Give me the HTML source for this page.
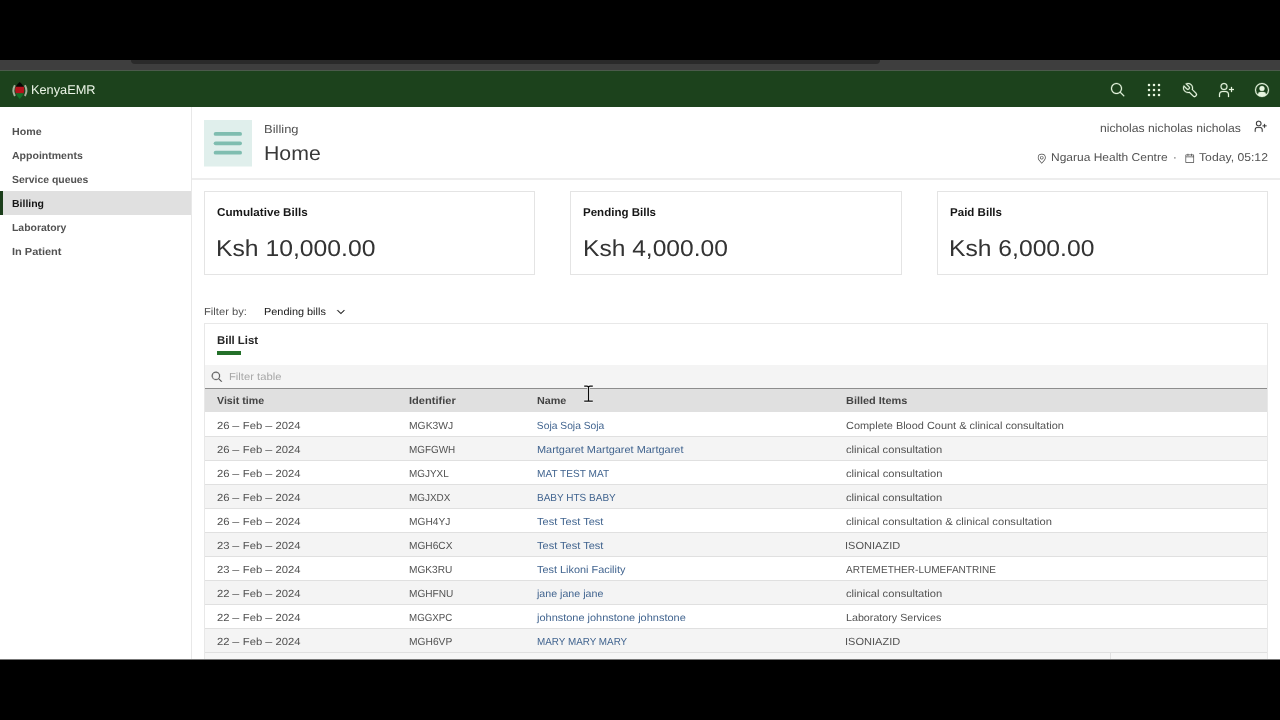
<!DOCTYPE html>
<html lang="en">
<head>
<meta charset="utf-8">
<title>KenyaEMR - Billing</title>
<style>
*{box-sizing:border-box;margin:0;padding:0}
html,body{width:1280px;height:720px;overflow:hidden;background:#000;font-family:"Liberation Sans",sans-serif;}
#stage{position:absolute;left:0;top:0;width:1280px;height:720px;background:#000;overflow:hidden}
.b{position:absolute}
#txt{position:absolute;left:0;top:0;width:1280px;height:720px;will-change:transform;text-rendering:geometricPrecision}
.t{position:absolute;white-space:nowrap;line-height:1;transform-origin:0 0;display:inline-block;font-family:"Liberation Sans",sans-serif}
.d{display:inline-block;width:.62em;transform:scaleX(.62);transform-origin:0 0;white-space:nowrap}
#chrome{left:0;top:60px;width:1280px;height:11px;background:#3e3e3e}
#chrome .tab{position:absolute;left:131px;top:0;width:749px;height:4px;background:#2a2a2a;border-radius:0 0 6px 6px}
#chrome .line{position:absolute;left:0;top:10px;width:1280px;height:1px;background:#4b5a4b}
#topbar{left:0;top:71px;width:1280px;height:36px;background:#1c421c}
#app{left:0;top:107px;width:1280px;height:553px;background:#fff}
#side{left:0;top:107px;width:192px;height:553px;border-right:1px solid #e8e8e8;background:#fff}
#navon{left:0;top:191px;width:191px;height:24px;background:#e0e0e0;border-left:3px solid #1a3d1a}
#phead{left:192px;top:107px;width:1088px;height:73px;border-bottom:2px solid #ededed}
.card{position:absolute;top:191px;height:84px;border:1px solid #e4e4e4;background:#fff}
#tbl{left:204px;top:323px;width:1064px;height:340px;border:1px solid #e8e8e8;background:#fff}
#ul{left:217px;top:351px;width:24px;height:4px;background:#24702a}
#search{left:205px;top:365px;width:1062px;height:24px;background:#f4f4f4;border-bottom:1px solid #8d8d8d}
#th{left:205px;top:389px;width:1062px;height:23px;background:#e0e0e0}
.row{position:absolute;left:205px;width:1062px;height:24px;border-bottom:1px solid #e0e0e0;background:#fff}
.row.g{background:#f4f4f4}
</style>
</head>
<body>
<div id="stage">
  <div class="b" id="chrome"><div class="tab"></div><div class="line"></div></div>
  <div class="b" id="topbar"></div>
  <div class="b" id="app"></div>
  <div class="b" id="side"></div>
  <div class="b" id="navon"></div>
  <div class="b" id="phead"></div>
  <div class="card" style="left:204px;width:331px"></div>
  <div class="card" style="left:570px;width:332px"></div>
  <div class="card" style="left:937px;width:331px"></div>
  <div class="b" id="tbl"></div>
  <div class="b" id="ul"></div>
  <div class="b" id="search"></div>
  <div class="b" id="th"></div>
  <div class="row" style="top:412px;height:25px"></div>
  <div class="row g" style="top:437px"></div>
  <div class="row" style="top:461px"></div>
  <div class="row g" style="top:485px"></div>
  <div class="row" style="top:509px"></div>
  <div class="row g" style="top:533px"></div>
  <div class="row" style="top:557px"></div>
  <div class="row g" style="top:581px"></div>
  <div class="row" style="top:605px"></div>
  <div class="row g" style="top:629px"></div>
  <div class="b" style="left:205px;top:653px;width:1062px;height:7px;background:#f6f6f6"></div>
  <div class="b" style="left:1110px;top:653px;width:1px;height:7px;background:#e0e0e0"></div>

  <!-- logo -->
  <svg class="b" style="left:10px;top:79.6px;width:20px;height:21px" viewBox="0 0 20 21">
    <path d="M4.9 5.300 Q1.900 10.600 4.900 15.900" fill="none" stroke="#a3b09b" stroke-width="2"/>
    <path d="M14.900 5.300 Q17.900 10.600 14.900 15.900" fill="none" stroke="#a3b09b" stroke-width="2"/>
    <path d="M9.700 2 Q6.600 4.500 5.500 6.900 L13.900 6.900 Q12.800 4.500 9.700 2Z" fill="#050805"/>
    <path d="M5.500 6.800 Q4.700 10 5.700 13.400 L13.700 13.400 Q14.700 10 13.900 6.800Z" fill="#b5121a"/>
    <path d="M5.700 13.300 Q6.900 16.600 9.700 18.900 Q12.500 16.600 13.700 13.300Z" fill="#15762a" fill-opacity="0.92"/>
  </svg>
  <!-- top icons -->
  <svg class="b" style="left:1110px;top:81.6px;width:16px;height:16px" viewBox="0 0 32 32" fill="#e6f5df" stroke="#e6f5df" stroke-width="0.5"><path d="M29,27.5859l-7.5521-7.5521a11.0177,11.0177,0,1,0-1.4141,1.4141L27.5859,29ZM4,13a9,9,0,1,1,9,9A9.01,9.01,0,0,1,4,13Z"/></svg>
  <svg class="b" style="left:1146px;top:81.6px;width:16px;height:16px" viewBox="0 0 32 32" fill="#e6f5df" stroke="#e6f5df" stroke-width="0.5"><path d="M14 4H18V8H14zM4 4H8V8H4zM24 4H28V8H24zM14 14H18V18H14zM4 14H8V18H4zM24 14H28V18H24zM14 24H18V28H14zM4 24H8V28H4zM24 24H28V28H24z"/></svg>
  <svg class="b" style="left:1182px;top:81.6px;width:16px;height:16px" viewBox="0 0 32 32" fill="#e6f5df" stroke="#e6f5df" stroke-width="0.5"><path d="M12.1,2A9.8,9.8,0,0,0,6.7,3.6L13.1,10a2.1,2.1,0,0,1,.2,3,2.1,2.1,0,0,1-3-.2L3.7,6.4A9.84,9.84,0,0,0,2,12.1,10.14,10.14,0,0,0,12.1,22.2a10.9,10.9,0,0,0,2.6-.3l6.7,6.7a5,5,0,0,0,7.1-7.1l-6.7-6.7a10.9,10.9,0,0,0,.3-2.6A10,10,0,0,0,12.1,2Zm8,10.1a7.61,7.61,0,0,1-.3,2.1l-.3,1.1.8.8,6.7,6.7a2.88,2.88,0,0,1,.9,2.1A2.720,2.720,0,0,1,27,27a2.900,2.900,0,0,1-4.200,0l-6.700-6.700-.8-.8-1.100.3a7.610,7.610,0,0,1-2.100.3,8.270,8.270,0,0,1-5.700-2.300A7.630,7.630,0,0,1,4,12.100a8.330,8.330,0,0,1,.3-2.200l4.400,4.400a4.140,4.140,0,0,0,5.900.2,4.140,4.140,0,0,0-.2-5.900L10,4.200a6.450,6.450,0,0,1,2-.3,8.270,8.270,0,0,1,5.700,2.300A8.490,8.490,0,0,1,20.100,12.100Z"/></svg>
  <svg class="b" style="left:1218px;top:81.6px;width:16px;height:16px" viewBox="0 0 32 32" fill="#e6f5df" stroke="#e6f5df" stroke-width="0.5"><path d="M32 14L28 14 28 10 26 10 26 14 22 14 22 16 26 16 26 20 28 20 28 16 32 16 32 14zM12 4a5 5 0 11-5 5 5 5 0 015-5m0-2a7 7 0 107 7A7 7 0 0012 2zM22 30H20V25a5 5 0 00-5-5H9a5 5 0 00-5 5v5H2V25a7 7 0 017-7h6a7 7 0 017 7z"/></svg>
  <svg class="b" style="left:1254px;top:81.6px;width:16px;height:16px" viewBox="0 0 32 32" fill="#e6f5df" stroke="#e6f5df" stroke-width="0.5"><path d="M16,8a5,5,0,1,0,5,5A5,5,0,0,0,16,8Z"/><path d="M16,2A14,14,0,1,0,30,16,14.0158,14.0158,0,0,0,16,2Zm7.9925,22.9258A5.0016,5.0016,0,0,0,19,20H13a5.0016,5.0016,0,0,0-4.9925,4.9258,12,12,0,1,1,15.985,0Z"/></svg>

  <!-- page icon -->
  <svg class="b" style="left:204px;top:120px;width:48px;height:47px" viewBox="0 0 48 47">
    <rect x="0" y="0" width="48" height="46.5" fill="#e0efec"/>
    <rect x="9.700" y="12" width="28.300" height="3.800" rx="1.9" fill="#7fbdb0"/>
    <rect x="9.700" y="21.400" width="28.300" height="3.800" rx="1.9" fill="#7fbdb0"/>
    <rect x="9.700" y="30.800" width="28.300" height="3.800" rx="1.9" fill="#7fbdb0"/>
  </svg>
  <!-- header right icons -->
  <svg class="b" style="left:1254.2px;top:120.1px;width:12.5px;height:12.5px" viewBox="0 0 32 32" fill="#2b2b2b" stroke="#2b2b2b" stroke-width="0.5"><path d="M32 14L28 14 28 10 26 10 26 14 22 14 22 16 26 16 26 20 28 20 28 16 32 16 32 14zM12 4a5 5 0 11-5 5 5 5 0 015-5m0-2a7 7 0 107 7A7 7 0 0012 2zM22 30H20V25a5 5 0 00-5-5H9a5 5 0 00-5 5v5H2V25a7 7 0 017-7h6a7 7 0 017 7z"/></svg>
  <svg class="b" style="left:1036px;top:152.7px;width:11.5px;height:11.5px" viewBox="0 0 32 32" fill="#4a4a4a"><path d="M16,18a5,5,0,1,1,5-5A5.0057,5.0057,0,0,1,16,18Zm0-8a3,3,0,1,0,3,3A3.0033,3.0033,0,0,0,16,10Z"/><path d="M16,30,7.5645,20.0513c-.0479-.0571-.3482-.4515-.3482-.4515A10.8888,10.8888,0,0,1,5,13a11,11,0,0,1,22,0,10.8844,10.8844,0,0,1-2.2148,6.5973l-.0015.0025s-.3.3944-.3447.4474ZM8.8125,18.395c.001.0007.2334.3082.2866.3744L16,26.9079l6.91-8.15c.0439-.0552.2783-.3649.2788-.3657A8.901,8.901,0,0,0,25,13,9,9,0,1,0,7,13a8.9054,8.9054,0,0,0,1.8125,5.395Z"/></svg>
  <svg class="b" style="left:1184px;top:153.3px;width:11.5px;height:11.5px" viewBox="0 0 32 32" fill="#4a4a4a"><path d="M26,4h-4V2h-2v2h-8V2h-2v2H6C4.9,4,4,4.9,4,6v20c0,1.1,0.9,2,2,2h20c1.1,0,2-0.9,2-2V6C28,4.9,27.1,4,26,4z M26,26H6V12h20V26z M26,10H6V6h4v2h2V6h8v2h2V6h4V10z"/></svg>
  <!-- chevron -->
  <svg class="b" style="left:335.4px;top:305.6px;width:11.8px;height:11.8px" viewBox="0 0 32 32" fill="#161616" stroke="#161616" stroke-width="0.9"><path d="M16 22L6 12 7.4 10.6 16 19.2 24.6 10.6 26 12z"/></svg>
  <!-- search icon -->
  <svg class="b" style="left:210.7px;top:370.9px;width:12px;height:12px" viewBox="0 0 32 32" fill="#4a4a4a" stroke="#4a4a4a" stroke-width="0.7"><path d="M29,27.5859l-7.5521-7.5521a11.0177,11.0177,0,1,0-1.4141,1.4141L27.5859,29ZM4,13a9,9,0,1,1,9,9A9.01,9.01,0,0,1,4,13Z"/></svg>
  <!-- I-beam cursor -->
  <svg class="b" style="left:582px;top:383px;width:14px;height:21px" viewBox="0 0 14 21"><g fill="none" stroke-linecap="butt"><path d="M2.2 3 H5 Q6.500 3 6.500 4.200 Q6.500 3 8 3 H10.800 M6.500 3.600 V17.600 M2.200 18.200 H5 Q6.500 18.200 6.500 17.200 Q6.500 18.200 8 18.200 H10.800" stroke="#fff" stroke-width="2.8" stroke-opacity="0.9"/><path d="M2.200 3 H5 Q6.500 3 6.500 4.200 Q6.500 3 8 3 H10.800 M6.500 3.600 V17.600 M2.200 18.200 H5 Q6.500 18.200 6.500 17.200 Q6.500 18.200 8 18.200 H10.800" stroke="#0a0a0a" stroke-width="1.25"/></g></svg>

<div class="b" style="left:0;top:659px;width:1280px;height:1px;background:#777"></div>
  <div class="b" style="left:0;top:660px;width:1280px;height:60px;background:#000"></div>
<div id="txt">
<span class="t" id="brand" style="left:30.58px;top:84px;font-size:12.7px;color:#ecf6e8;transform:scaleX(1.0064)">KenyaEMR</span>
<span class="t" id="nav0" style="left:12.48px;top:128px;font-size:10.3px;color:#525252;font-weight:bold;transform:scaleX(1.0356)">Home</span>
<span class="t" id="nav1" style="left:12.23px;top:152px;font-size:10.3px;color:#525252;font-weight:bold;transform:scaleX(1.0222)">Appointments</span>
<span class="t" id="nav2" style="left:12.24px;top:176px;font-size:10.3px;color:#525252;font-weight:bold;transform:scaleX(1.0114)">Service queues</span>
<span class="t" id="nav3" style="left:12.46px;top:200px;font-size:10.3px;color:#161616;font-weight:bold;transform:scaleX(1.0170)">Billing</span>
<span class="t" id="nav4" style="left:11.91px;top:224px;font-size:10.3px;color:#525252;font-weight:bold;transform:scaleX(1.0116)">Laboratory</span>
<span class="t" id="nav5" style="left:12.27px;top:248px;font-size:10.3px;color:#525252;font-weight:bold;transform:scaleX(1.0683)">In Patient</span>
<span class="t" id="ph1" style="left:263.82px;top:125px;font-size:11.5px;color:#525252;transform:scaleX(1.1254)">Billing</span>
<span class="t" id="ph2" style="left:263.87px;top:144px;font-size:20.1px;color:#393939;transform:scaleX(1.0594)">Home</span>
<span class="t" id="user" style="left:1100.43px;top:123px;font-size:11.7px;color:#525252;transform:scaleX(1.0423)">nicholas nicholas nicholas</span>
<span class="t" id="loc" style="left:1050.80px;top:153px;font-size:11.3px;color:#525252;transform:scaleX(1.0610)">Ngarua Health Centre</span>
<span class="t" id="dot" style="left:1173.00px;top:153px;font-size:11.3px;color:#525252;transform:scaleX(1.0000)">·</span>
<span class="t" id="time" style="left:1199.00px;top:153px;font-size:11.3px;color:#525252;transform:scaleX(1.0793)">Today, 05:12</span>
<span class="t" id="c1t" style="left:216.67px;top:208px;font-size:11.4px;color:#161616;font-weight:bold;transform:scaleX(1.0240)">Cumulative Bills</span>
<span class="t" id="c2t" style="left:583.12px;top:208px;font-size:11.4px;color:#161616;font-weight:bold;transform:scaleX(1.0121)">Pending Bills</span>
<span class="t" id="c3t" style="left:950.14px;top:208px;font-size:11.4px;color:#161616;font-weight:bold;transform:scaleX(1.0140)">Paid Bills</span>
<span class="t" id="c1v" style="left:216.24px;top:237px;font-size:23px;color:#333333;transform:scaleX(1.0746)">Ksh 10,000.00</span>
<span class="t" id="c2v" style="left:582.73px;top:237px;font-size:23px;color:#333333;transform:scaleX(1.0688)">Ksh 4,000.00</span>
<span class="t" id="c3v" style="left:949.40px;top:237px;font-size:23px;color:#333333;transform:scaleX(1.0723)">Ksh 6,000.00</span>
<span class="t" id="f1" style="left:203.61px;top:308px;font-size:10.3px;color:#525252;transform:scaleX(1.0877)">Filter by:</span>
<span class="t" id="f2" style="left:264.48px;top:308px;font-size:10.3px;color:#161616;transform:scaleX(1.0592)">Pending bills</span>
<span class="t" id="tt" style="left:217.00px;top:336px;font-size:11.3px;color:#262626;font-weight:bold;transform:scaleX(1.0078)">Bill List</span>
<span class="t" id="ph" style="left:229.13px;top:373px;font-size:10.3px;color:#a8a8a8;transform:scaleX(1.0921)">Filter table</span>
<span class="t" id="h1" style="left:216.73px;top:397px;font-size:10.3px;color:#444444;font-weight:bold;transform:scaleX(1.0322)">Visit time</span>
<span class="t" id="h2" style="left:409.47px;top:397px;font-size:10.3px;color:#444444;font-weight:bold;transform:scaleX(1.0747)">Identifier</span>
<span class="t" id="h3" style="left:537.08px;top:397px;font-size:10.3px;color:#444444;font-weight:bold;transform:scaleX(1.0467)">Name</span>
<span class="t" id="h4" style="left:846.37px;top:397px;font-size:10.3px;color:#444444;font-weight:bold;transform:scaleX(1.0623)">Billed Items</span>
<span class="t" id="r0a" style="left:216.77px;top:422px;font-size:10.3px;color:#525252;transform:scaleX(1.0950)">26 <span class="d">—</span> Feb <span class="d">—</span> 2024</span>
<span class="t" id="r0b" style="left:409.04px;top:422px;font-size:10.3px;color:#525252;transform:scaleX(1.0029)">MGK3WJ</span>
<span class="t" id="r0c" style="left:536.81px;top:422px;font-size:10.3px;color:#41648f;transform:scaleX(1.0000)">Soja Soja Soja</span>
<span class="t" id="r0d" style="left:846.27px;top:422px;font-size:10.3px;color:#525252;transform:scaleX(1.0631)">Complete Blood Count &amp; clinical consultation</span>
<span class="t" id="r1a" style="left:216.79px;top:446px;font-size:10.3px;color:#525252;transform:scaleX(1.0946)">26 <span class="d">—</span> Feb <span class="d">—</span> 2024</span>
<span class="t" id="r1b" style="left:409.18px;top:446px;font-size:10.3px;color:#525252;transform:scaleX(0.9630)">MGFGWH</span>
<span class="t" id="r1c" style="left:536.84px;top:446px;font-size:10.3px;color:#41648f;transform:scaleX(1.0619)">Martgaret Martgaret Martgaret</span>
<span class="t" id="r1d" style="left:845.94px;top:446px;font-size:10.3px;color:#525252;transform:scaleX(1.0848)">clinical consultation</span>
<span class="t" id="r2a" style="left:216.77px;top:470px;font-size:10.3px;color:#525252;transform:scaleX(1.0950)">26 <span class="d">—</span> Feb <span class="d">—</span> 2024</span>
<span class="t" id="r2b" style="left:409.02px;top:470px;font-size:10.3px;color:#525252;transform:scaleX(0.9628)">MGJYXL</span>
<span class="t" id="r2c" style="left:536.90px;top:470px;font-size:10.3px;color:#41648f;transform:scaleX(0.9819)">MAT TEST MAT</span>
<span class="t" id="r2d" style="left:846.35px;top:470px;font-size:10.3px;color:#525252;transform:scaleX(1.0865)">clinical consultation</span>
<span class="t" id="r3a" style="left:216.79px;top:494px;font-size:10.3px;color:#525252;transform:scaleX(1.0946)">26 <span class="d">—</span> Feb <span class="d">—</span> 2024</span>
<span class="t" id="r3b" style="left:409.29px;top:494px;font-size:10.3px;color:#525252;transform:scaleX(0.9627)">MGJXDX</span>
<span class="t" id="r3c" style="left:536.68px;top:494px;font-size:10.3px;color:#41648f;transform:scaleX(0.9712)">BABY HTS BABY</span>
<span class="t" id="r3d" style="left:845.94px;top:494px;font-size:10.3px;color:#525252;transform:scaleX(1.0848)">clinical consultation</span>
<span class="t" id="r4a" style="left:216.77px;top:518px;font-size:10.3px;color:#525252;transform:scaleX(1.0950)">26 <span class="d">—</span> Feb <span class="d">—</span> 2024</span>
<span class="t" id="r4b" style="left:409.11px;top:518px;font-size:10.3px;color:#525252;transform:scaleX(0.9911)">MGH4YJ</span>
<span class="t" id="r4c" style="left:536.97px;top:518px;font-size:10.3px;color:#41648f;transform:scaleX(1.0712)">Test Test Test</span>
<span class="t" id="r4d" style="left:846.04px;top:518px;font-size:10.3px;color:#525252;transform:scaleX(1.0837)">clinical consultation &amp; clinical consultation</span>
<span class="t" id="r5a" style="left:216.79px;top:542px;font-size:10.3px;color:#525252;transform:scaleX(1.0946)">23 <span class="d">—</span> Feb <span class="d">—</span> 2024</span>
<span class="t" id="r5b" style="left:409.06px;top:542px;font-size:10.3px;color:#525252;transform:scaleX(0.9854)">MGH6CX</span>
<span class="t" id="r5c" style="left:536.96px;top:542px;font-size:10.3px;color:#41648f;transform:scaleX(1.0712)">Test Test Test</span>
<span class="t" id="r5d" style="left:845.42px;top:542px;font-size:10.3px;color:#525252;transform:scaleX(1.0715)">ISONIAZID</span>
<span class="t" id="r6a" style="left:216.77px;top:566px;font-size:10.3px;color:#525252;transform:scaleX(1.0950)">23 <span class="d">—</span> Feb <span class="d">—</span> 2024</span>
<span class="t" id="r6b" style="left:409.06px;top:566px;font-size:10.3px;color:#525252;transform:scaleX(0.9839)">MGK3RU</span>
<span class="t" id="r6c" style="left:536.88px;top:566px;font-size:10.3px;color:#41648f;transform:scaleX(1.0576)">Test Likoni Facility</span>
<span class="t" id="r6d" style="left:846.21px;top:566px;font-size:10.3px;color:#525252;transform:scaleX(0.9760)">ARTEMETHER-LUMEFANTRINE</span>
<span class="t" id="r7a" style="left:216.79px;top:590px;font-size:10.3px;color:#525252;transform:scaleX(1.0946)">22 <span class="d">—</span> Feb <span class="d">—</span> 2024</span>
<span class="t" id="r7b" style="left:409.06px;top:590px;font-size:10.3px;color:#525252;transform:scaleX(0.9821)">MGHFNU</span>
<span class="t" id="r7c" style="left:537.20px;top:590px;font-size:10.3px;color:#41648f;transform:scaleX(1.0339)">jane jane jane</span>
<span class="t" id="r7d" style="left:845.94px;top:590px;font-size:10.3px;color:#525252;transform:scaleX(1.0848)">clinical consultation</span>
<span class="t" id="r8a" style="left:216.77px;top:614px;font-size:10.3px;color:#525252;transform:scaleX(1.0950)">22 <span class="d">—</span> Feb <span class="d">—</span> 2024</span>
<span class="t" id="r8b" style="left:409.27px;top:614px;font-size:10.3px;color:#525252;transform:scaleX(0.9476)">MGGXPC</span>
<span class="t" id="r8c" style="left:537.34px;top:614px;font-size:10.3px;color:#41648f;transform:scaleX(1.0647)">johnstone johnstone johnstone</span>
<span class="t" id="r8d" style="left:846.21px;top:614px;font-size:10.3px;color:#525252;transform:scaleX(1.0400)">Laboratory Services</span>
<span class="t" id="r9a" style="left:216.79px;top:638px;font-size:10.3px;color:#525252;transform:scaleX(1.0946)">22 <span class="d">—</span> Feb <span class="d">—</span> 2024</span>
<span class="t" id="r9b" style="left:409.09px;top:638px;font-size:10.3px;color:#525252;transform:scaleX(0.9952)">MGH6VP</span>
<span class="t" id="r9c" style="left:536.75px;top:638px;font-size:10.3px;color:#41648f;transform:scaleX(0.9593)">MARY MARY MARY</span>
<span class="t" id="r9d" style="left:845.42px;top:638px;font-size:10.3px;color:#525252;transform:scaleX(1.0715)">ISONIAZID</span>
</div>
</div>
</body>
</html>
